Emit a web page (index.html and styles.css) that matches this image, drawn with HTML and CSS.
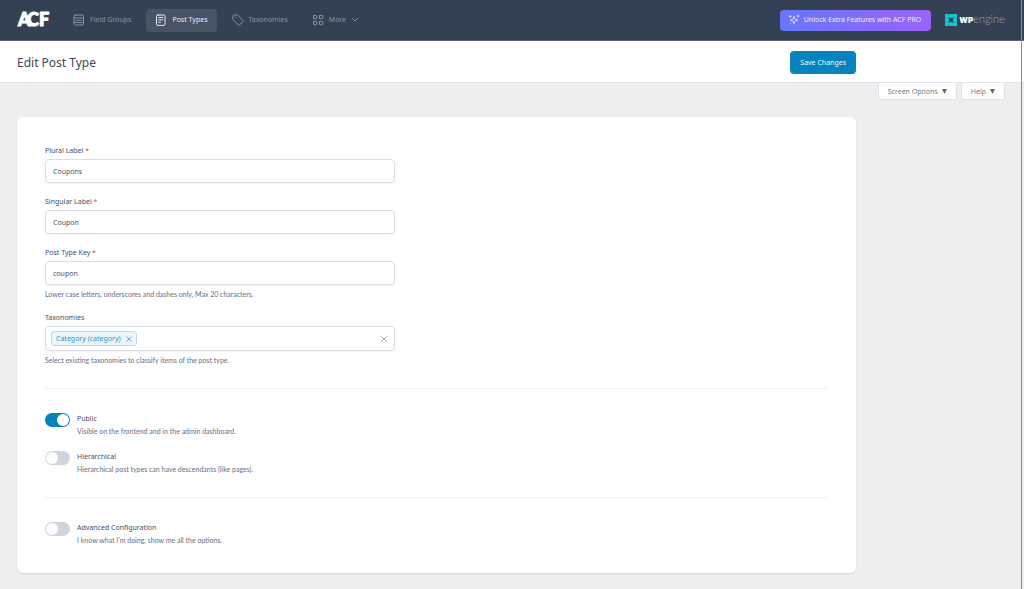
FILE: index.html
```html
<!DOCTYPE html>
<html lang="en">
<head>
<meta charset="utf-8">
<meta name="viewport" content="width=device-width, initial-scale=1">
<title>Edit Post Type</title>
<link rel="stylesheet" href="styles.css">
</head>
<body>
<header class="topbar">
  <a class="logo" href="#" aria-label="ACF">
    <svg width="36" height="24" viewBox="0 0 36 24"><text class="logo-text" y="18" x="1 10 22">ACF</text></svg>
  </a>
  <nav class="nav">
    <a class="nav-item" href="#">
      <svg class="icon" width="12" height="12" viewBox="0 0 12 12"><rect x="1" y="1" width="9.500" height="10" rx="1.500"/><path d="M1 4h9.500M1 8.600h9.500M3.200 6.300h5"/></svg>
      Field Groups
    </a>
    <a class="nav-item active" href="#">
      <svg class="icon" width="12" height="12" viewBox="0 0 12 12"><rect x="1.500" y="1" width="8.500" height="10.400" rx="1.500"/><path d="M3.800 3.500h4M3.800 5.800h4M3.800 8.200h1.800"/></svg>
      Post Types
    </a>
    <a class="nav-item" href="#">
      <svg class="icon" width="12" height="12" viewBox="0 0 12 12"><path d="M1 1.600Q1 1 1.600 1H5.400L11 6.400Q11.500 7 11 7.500L7.500 11Q7 11.500 6.400 11L1 5.600Z"/><circle cx="3.500" cy="3.500" r=".2"/></svg>
      Taxonomies
    </a>
    <a class="nav-item" href="#">
      <svg class="icon" width="12" height="12" viewBox="0 0 12 12"><rect x="1.500" y="1.500" width="3.300" height="3.300" rx=".4"/><rect x="7.500" y="1.500" width="3.300" height="3.300" rx=".4"/><rect x="1.500" y="7.500" width="3.300" height="3.300" rx=".4"/><rect x="7.500" y="7.500" width="3.300" height="3.300" rx=".4"/></svg>
      More
      <svg class="icon" width="8" height="6" viewBox="0 0 8 6"><path d="M1.500 1.500L4 4L6.500 1.500"/></svg>
    </a>
  </nav>
  <a class="upgrade" href="#">
    <svg class="icon" width="12" height="12" viewBox="0 0 12 12"><path class="sparkle" d="M6 2.700L7 5.200L9.700 6.200L7 7.200L6 9.800L5 7.200L2.300 6.200L5 5.200ZM10 1.200v1.800M9.100 2.100h1.800M2.200 1.600v1.600M1.400 2.400h1.600M2.200 9.600h.1"/></svg>
    Unlock Extra Features with ACF PRO
  </a>
  <a class="wpengine" href="#">
    <svg width="12" height="12" viewBox="0 0 12 12"><rect width="12" height="12" fill="#0ecad4"/><path d="M3.500 3.500l1.200.8h2.600l1.200-.8-.8 1.200v2.600l.8 1.200-1.200-.8H4.700l-1.200.8.8-1.200V4.700Z" fill="#344054" stroke="#344054" stroke-width=".6"/><path d="M4 0v2.500M8 0v2.500M4 9.500V12M8 9.500V12M0 4h2.500M9.500 4H12M0 8h2.500M9.500 8H12" stroke="#344054" stroke-width=".2"/></svg>
    <span><b>WP</b>engine<i>'</i></span>
  </a>
</header>

<form class="page">
  <div class="titlebar">
    <h1>Edit Post Type</h1>
    <button class="save" type="submit">Save Changes</button>
  </div>
  <div class="screen-meta">
    <button type="button">Screen Options <svg width="5" height="5" viewBox="0 0 5 5"><path d="M0 0h5L2.500 5Z"/></svg></button>
    <button type="button">Help <svg width="5" height="5" viewBox="0 0 5 5"><path d="M0 0h5L2.500 5Z"/></svg></button>
  </div>

  <main class="card">
    <div class="field">
      <label for="plural">Plural Label <span class="required">*</span></label>
      <input id="plural" type="text" value="Coupons">
    </div>
    <div class="field">
      <label for="singular">Singular Label <span class="required">*</span></label>
      <input id="singular" type="text" value="Coupon">
    </div>
    <div class="field">
      <label for="key">Post Type Key <span class="required">*</span></label>
      <input id="key" type="text" value="coupon">
      <p class="hint">Lower case letters, underscores and dashes only, Max 20 characters.</p>
    </div>
    <div class="field">
      <label for="taxonomies">Taxonomies</label>
      <div class="multi">
        <span class="tag">Category (category)
          <button type="button" aria-label="Remove Category"><svg class="icon" width="6" height="6" viewBox="0 0 6 6"><path d="M.7 .7l4.600 4.600M5.300 .7L.7 5.300"/></svg></button>
        </span>
        <input id="taxonomies" type="text">
        <button class="clear" type="button" aria-label="Clear"><svg class="icon" width="6" height="6" viewBox="0 0 6 6"><path d="M.7 .7l4.600 4.600M5.300 .7L.7 5.300"/></svg></button>
      </div>
      <p class="hint">Select existing taxonomies to classify items of the post type.</p>
    </div>
    <hr>
    <div class="toggles">
      <div class="toggle">
        <input id="public" type="checkbox" role="switch" checked>
        <div><label for="public">Public</label><p class="hint">Visible on the frontend and in the admin dashboard.</p></div>
      </div>
      <div class="toggle">
        <input id="hierarchical" type="checkbox" role="switch">
        <div><label for="hierarchical">Hierarchical</label><p class="hint">Hierarchical post types can have descendants (like pages).</p></div>
      </div>
    </div>
    <hr>
    <div class="toggles">
      <div class="toggle">
        <input id="advanced" type="checkbox" role="switch">
        <div><label for="advanced">Advanced Configuration</label><p class="hint">I know what I'm doing, show me all the options.</p></div>
      </div>
    </div>
  </main>
</form>
<div class="scroll-edge"></div>
</body>
</html>
```
FILE: styles.css
```css
* { box-sizing: border-box; }
body {
  margin: 0;
  min-height: 100vh;
  background: #eeeef0;
  color: #475467;
  font: 7px/12px "Noto Sans", sans-serif;
}
h1, p { margin: 0; }
a { color: inherit; text-decoration: none; }
button, input { font: inherit; color: inherit; }
svg { display: block; flex: none; }
.icon { fill: none; stroke: currentColor; stroke-width: 1; stroke-linecap: round; stroke-linejoin: round; }

.topbar {
  display: flex;
  align-items: center;
  height: 41px;
  padding: 0 18px 0 17px;
  background: #344054;
  border-bottom: 1px solid #576274;
  color: #98a2b3;
}
.logo-text { font: 900 18px "Lato", sans-serif; fill: #fff; stroke: #fff; stroke-width: 1; }
.nav { display: flex; gap: 6px; margin-left: 11px; }
.nav-item {
  display: flex;
  align-items: center;
  gap: 5px;
  height: 23px;
  padding: 0 9px;
  border-radius: 4px;
  color: #8792a4;
}
.nav-item.active { background: #475467; color: #eaecf0; }
.upgrade {
  display: flex;
  align-items: center;
  gap: 4px;
  height: 21px;
  margin-left: auto;
  padding: 0 10px 0 8px;
  border-radius: 4px;
  background: linear-gradient(90deg, #6677fb, #9a62fb);
  color: #f2f0ff;
}
.sparkle { stroke-width: .8; }
.wpengine {
  display: flex;
  align-items: center;
  gap: 2px;
  margin-left: 14px;
  font: 300 11px/12px "Lato", sans-serif;
}
.wpengine b { font: 900 8px/12px "Inter", sans-serif; color: #fff; }
.wpengine i { font-style: normal; font-size: 6px; }

.titlebar {
  display: flex;
  align-items: center;
  justify-content: space-between;
  height: 42px;
  padding: 2px 168px 0 17px;
  background: #fff;
  border-bottom: 1px solid #e2e4e8;
}
h1 { font-size: 12px; line-height: 16px; font-weight: 400; color: #3d485b; }
.save {
  height: 23px;
  padding: 0 10px;
  border: 0;
  border-radius: 4px;
  background: #0783be;
  color: #f0f8fc;
}
.screen-meta { display: flex; justify-content: flex-end; gap: 4px; padding-right: 19px; }
.screen-meta button {
  display: flex;
  align-items: center;
  gap: 4px;
  height: 17px;
  padding: 1px 9px 0;
  border: 1px solid #dfe1e5;
  border-top: 0;
  border-radius: 0 0 3px 3px;
  background: #fff;
  color: #787c82;
}
.screen-meta svg { fill: #646970; }

.card {
  margin: 17px 168px 17px 17px;
  padding: 28px;
  border-radius: 6px;
  background: #fff;
  box-shadow: 0 1px 2px #1018281a;
}
.field { max-width: 350px; margin-bottom: 13px; }
label { display: block; line-height: 12px; color: #475064; }
.required { color: #f04438; }
.field > input, .multi {
  width: 100%;
  height: 24px;
  margin-top: 2px;
  border: 1px solid #d9dce3;
  border-radius: 4px;
  background: #fff;
  box-shadow: 0 1px 1px #1018280d;
}
.field > input { display: block; padding: 0 7px; }
.hint { font: 7px/10px "Lato", sans-serif; color: #667085; }
.field .hint { margin-top: 4px; }
.multi { display: flex; align-items: center; height: 25px; padding: 0 7px 0 5px; }
.multi > input { flex: 1; min-width: 0; border: 0; background: none; outline: 0; }
.multi button { padding: 0; border: 0; background: none; color: #98a2b3; }
.tag {
  display: flex;
  align-items: center;
  gap: 5px;
  height: 15px;
  padding: 0 4px;
  border: 1px solid #b5dbed;
  border-radius: 3px;
  background: #ebf5fa;
  color: #2b94c7;
}
.multi .tag button { color: #66aed0; }
hr { height: 1px; margin: 23px 0; border: 0; background: #eff0f3; }
.toggles { display: grid; gap: 14px; }
.toggle { display: flex; align-items: flex-start; gap: 7px; }
.toggle > div { padding-top: 1px; }
.toggle input {
  appearance: none;
  display: flex;
  width: 25px;
  height: 14px;
  margin: 1px 0 0;
  padding: 1px;
  border-radius: 7px;
  background: #d0d5dd;
}
.toggle .hint { margin-top: 1px; }
.toggle input::before { content: ""; width: 12px; height: 12px; border-radius: 50%; background: #fff; }
.toggle input:checked { justify-content: flex-end; background: #0783be; }
.scroll-edge { position: fixed; top: 0; bottom: 0; right: 2px; width: 1px; background: #8b8c8f; }
```
